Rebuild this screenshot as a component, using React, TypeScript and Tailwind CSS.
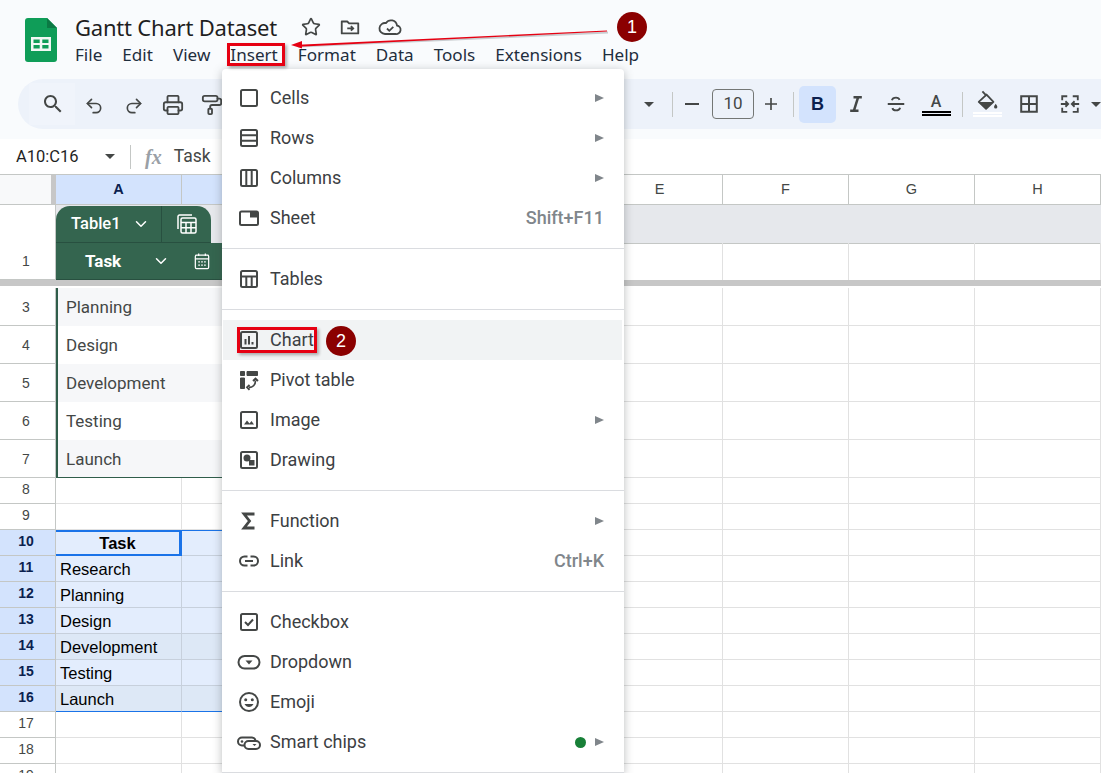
import { Printer, PaintRoller, Redo2, Star, Undo2, ChevronDown } from 'lucide-react'
import type { ReactNode } from 'react'

const sans = '[font-family:Roboto,sans-serif]'
const arial = '[font-family:Liberation_Sans,Arial,sans-serif]'

function Ico({ children, size = 24, className = '' }: { children: ReactNode; size?: number; className?: string }) {
  return (
    <svg
      viewBox="0 0 24 24"
      width={size}
      height={size}
      fill="none"
      stroke="currentColor"
      strokeWidth={2}
      className={`shrink-0 ${className}`}
    >
      {children}
    </svg>
  )
}

function Caret({ className = '' }: { className?: string }) {
  return <span className={`block w-0 h-0 border-x-[5px] border-x-transparent border-t-[5px] border-t-[#444746] ${className}`} />
}

const menuIcons: Record<string, ReactNode> = {
  Cells: <rect x="4" y="4" width="16" height="16" rx="1.5" />,
  Rows: (
    <>
      <rect x="4" y="4" width="16" height="16" rx="1.5" />
      <path d="M4 9.300h16M4 14.700h16" />
    </>
  ),
  Columns: (
    <>
      <rect x="4" y="4" width="16" height="16" rx="1.5" />
      <path d="M9.300 4v16M14.700 4v16" />
    </>
  ),
  Sheet: (
    <>
      <rect x="3" y="5.500" width="18" height="13.500" rx="1.500" />
      <path d="M13 5.500h8v6h-8z" fill="currentColor" stroke="none" />
    </>
  ),
  Tables: (
    <>
      <rect x="4" y="4" width="16" height="16" rx="1.5" />
      <path d="M4 9.500h16M9.300 9.500V20M14.700 9.500V20" />
    </>
  ),
  Chart: (
    <>
      <rect x="4" y="4" width="16" height="16" rx="1.5" />
      <path d="M8.500 11v5.500M12 8v8.500M15.500 14v2.500" />
    </>
  ),
  'Pivot table': (
    <>
      <path d="M3.500 3.500h4v4h-4zM10 3.500h10.500v4H10zM3.500 10h4v10.500h-4z" fill="currentColor" stroke="currentColor" strokeWidth={1} strokeLinejoin="round" />
      <path d="M12 19.500c3.500 0 6.500-2.500 6.500-7M12.500 16.800 10 19.300l2.500 2.500M16 13l2.500-2.500L21 13" strokeWidth={1.800} />
    </>
  ),
  Image: (
    <>
      <rect x="4" y="4" width="16" height="16" rx="1.5" />
      <path d="m7 16.500 3-4 2.500 3 2-2.500 2.500 3.500z" fill="currentColor" stroke="none" />
    </>
  ),
  Drawing: (
    <>
      <rect x="4" y="4" width="16" height="16" rx="1.5" />
      <circle cx="10" cy="10" r="3.500" fill="currentColor" stroke="none" />
      <path d="M12 12h5.500v5.500H12z" fill="currentColor" stroke="none" />
    </>
  ),
  Function: <path d="M17.500 5H7l5.500 7L7 19h10.500" strokeWidth={2.800} />,
  Link: <path d="M10.500 7.500H7.500a4.500 4.500 0 0 0 0 9h3M13.500 7.500h3a4.500 4.500 0 0 1 0 9h-3M8 12h8" />,
  Checkbox: (
    <>
      <rect x="4" y="4" width="16" height="16" rx="1.500" />
      <path d="m8 12 3 3 5-5.500" />
    </>
  ),
  Dropdown: (
    <>
      <rect x="1.500" y="6" width="21" height="12.500" rx="6.200" />
      <path d="M8.500 10.500h7L12 14.500z" fill="currentColor" stroke="none" />
    </>
  ),
  Emoji: (
    <>
      <circle cx="12" cy="12" r="9" />
      <circle cx="8.700" cy="9.800" r="1.500" fill="currentColor" stroke="none" />
      <circle cx="15.300" cy="9.800" r="1.500" fill="currentColor" stroke="none" />
      <path d="M7.500 14c1 2 2.600 3 4.500 3s3.500-1 4.500-3z" fill="currentColor" stroke="none" />
    </>
  ),
  'Smart chips': (
    <>
      <path d="M7 15.500H5a3.800 3.800 0 0 1 0-8h10a3.800 3.800 0 0 1 3.500 3" />
      <rect x="7.500" y="11" width="15.500" height="8" rx="4" />
      <circle cx="5" cy="11.500" r="1.300" fill="currentColor" stroke="none" />
      <path d="M15.500 14h4l-2 2z" fill="currentColor" stroke="none" />
    </>
  ),
}

type Item = { label: string; sub?: boolean; keys?: string; dot?: boolean; hot?: boolean }

const menuGroups: Item[][] = [
  [{ label: 'Cells', sub: true }, { label: 'Rows', sub: true }, { label: 'Columns', sub: true }, { label: 'Sheet', keys: 'Shift+F11' }],
  [{ label: 'Tables' }],
  [{ label: 'Chart', hot: true }, { label: 'Pivot table' }, { label: 'Image', sub: true }, { label: 'Drawing' }],
  [{ label: 'Function', sub: true }, { label: 'Link', keys: 'Ctrl+K' }],
  [{ label: 'Checkbox' }, { label: 'Dropdown' }, { label: 'Emoji' }, { label: 'Smart chips', sub: true, dot: true }],
]

function InsertMenu() {
  return (
    <div className={`absolute left-[222px] top-[69px] w-[402px] h-[704px] bg-white pt-[9px] shadow-[0_2px_10px_rgba(60,64,67,0.35)] rounded-t-[4px] z-20 ${sans}`}>
      {menuGroups.map((group, i) => (
        <div key={i} className="border-b border-[#dadce0] pb-[10px] mb-[10px]">
          {group.map((item) => (
            <div
              key={item.label}
              className={`h-[40px] flex items-center pl-[14px] pr-[18px] mr-[2px] ml-[1px] text-[18px] text-[#3c4043] ${item.hot ? 'bg-[#f1f3f4]' : ''}`}
            >
              <Ico className="text-[#444746]">{menuIcons[item.label]}</Ico>
              <span className="ml-[9px] mb-[2px]">{item.label}</span>
              {item.keys && <span className="ml-auto mb-[2px] text-[#80868b] font-medium">{item.keys}</span>}
              {item.dot && <span className="ml-auto mr-[9px] w-[11px] h-[11px] rounded-full bg-[#188038]" />}
              {item.sub && (
                <span className={`${item.dot ? '' : 'ml-auto'} block w-0 h-0 border-y-[4px] border-y-transparent border-l-[9px] border-l-[#80868b]`} />
              )}
            </div>
          ))}
        </div>
      ))}
    </div>
  )
}

function Header() {
  return (
    <div className="h-[139px] bg-[#f9fbfd] flex flex-col">
      <div className="h-[79px] flex">
        <svg viewBox="0 0 32 44" width="32" height="44" className="ml-[25px] mt-[18px] shrink-0">
          <path d="M3 0h19l10 10v31a3 3 0 0 1-3 3H3a3 3 0 0 1-3-3V3a3 3 0 0 1 3-3z" fill="#0f9d58" />
          <path d="M22 0l10 10H22z" fill="#0b7a44" />
          <path d="M6 19h20v14H6z" fill="#f1f8f4" />
          <path d="M8.500 21.500h6.200v3.500H8.500zM17.300 21.500h6.200v3.500h-6.200zM8.500 27h6.200v3.500H8.500zM17.300 27h6.200v3.500h-6.200z" fill="#0f9d58" />
        </svg>
        <div className="ml-[18px] flex flex-col">
          <div className="flex items-center h-[30px] mt-[12px] text-[#1f1f1f]">
            <span className="text-[22px] leading-[30px] [font-family:Noto_Sans,sans-serif] tracking-[-0.2px]">Gantt Chart Dataset</span>
            <Star size={20} strokeWidth={2} className="ml-[24px] text-[#444746]" />
            <Ico size={22} className="ml-[18px] text-[#444746]">
              <path d="M3 19V6h6l2 2h10v11z" strokeLinejoin="round" />
              <path d="M9 13.500h6M13 11l2.500 2.500L13 16" />
            </Ico>
            <Ico size={24} className="ml-[17px] text-[#444746]">
              <path d="M17.500 19H7a5.500 5.500 0 1 1 1-10.900 6 6 0 0 1 11 2.400 4.300 4.300 0 0 1-1.500 8.500z" strokeWidth={1.800} />
              <path d="m9 13.500 2.300 2.300 4-4" strokeWidth={1.800} />
            </Ico>
          </div>
          <div className="flex gap-[20px] mt-[1px] text-[17.100px] leading-[24px] text-[#1f2e3d] [font-family:Noto_Sans,sans-serif]">
            {['File', 'Edit', 'View', 'Insert', 'Format', 'Data', 'Tools', 'Extensions', 'Help'].map((m) => (
              <span key={m}>{m}</span>
            ))}
          </div>
        </div>
      </div>
      <div className="h-[50px] w-[1083px] ml-[18px] bg-[#edf2fa] rounded-l-[25px] flex items-center overflow-hidden text-[#444746]">
        <div className="w-[46px] h-[42px] ml-[11px] bg-[#f0f4fb] flex items-center justify-center">
          <svg viewBox="0 0 24 24" width="24" height="24" fill="currentColor" className="ml-[2px]">
            <path d="M15.500 14h-.79l-.28-.27C15.410 12.590 16 11.110 16 9.500 16 5.910 13.090 3 9.500 3S3 5.910 3 9.500 5.910 16 9.500 16c1.610 0 3.090-.59 4.230-1.570l.27.28v.79l5 4.990L20.490 19l-4.990-5zm-6 0C7.010 14 5 11.990 5 9.500S7.010 5 9.500 5 14 7.010 14 9.500 11.990 14 9.500 14z" />
          </svg>
        </div>
        <Undo2 size={20} strokeWidth={2} className="ml-[9px] mt-[3px]" />
        <Redo2 size={20} strokeWidth={2} className="ml-[20px] mt-[3px]" />
        <Printer size={22} strokeWidth={2} className="ml-[18px] mt-[2px]" />
        <PaintRoller size={22} strokeWidth={2} className="ml-[17px] mt-[2px]" />
        <div className="ml-auto flex items-center shrink-0 w-[461px] h-full">
          <Caret className="ml-[4px]" />
          <span className="ml-[18px] w-px h-[25px] bg-[#c4c7c5]" />
          <span className="ml-[12px] w-[14px] h-[2px] bg-[#444746]" />
          <span className={`ml-[13px] w-[42px] h-[30px] border border-[#747775] rounded-[4px] flex items-center justify-center text-[17px] text-[#444746] ${sans}`}>10</span>
          <Ico size={18} className="ml-[8px]"><path d="M12 4v16M4 12h16" strokeWidth={2.200} /></Ico>
          <span className="ml-[13px] w-px h-[25px] bg-[#c4c7c5]" />
          <span className={`ml-[5px] w-[37px] h-[37px] rounded-[5px] bg-[#d3e3fd] flex items-center justify-center text-[18px] font-bold text-[#0b1f4f] ${arial}`}>B</span>
          <span className="ml-[5px] w-[30px] flex justify-center">
            <Ico size={20}><path d="M9 4h10M5 20h10M14.500 4l-5 16" strokeWidth={3} /></Ico>
          </span>
          <span className="ml-[10px] w-[30px] flex justify-center">
            <Ico size={22}><path d="M3 12h18M7.500 8c.5-2 2.500-3 4.500-3s3.500 1 4 2.500M16.500 16c-.5 2-2.500 3-4.500 3s-3.500-1-4-2.500" /></Ico>
          </span>
          <span className="ml-[10px] w-[30px] flex flex-col items-center">
            <span className={`text-[16px] leading-[17px] font-medium text-[#444746] ${sans}`}>A</span>
            <span className="w-[29px] h-[5px] mt-[1px] border-y-2 border-black" />
          </span>
          <span className="ml-[11px] w-px h-[25px] bg-[#c4c7c5]" />
          <span className="ml-[9px] w-[30px] flex flex-col items-center">
            <Ico size={22} className="-mt-[1px]">
              <path d="m7 1.500 4.500 5" />
              <path d="M11.500 5 3 13l8 7.500 8-7.500z" strokeLinejoin="round" />
              <path d="M3 13h16l-8 7.500z" fill="currentColor" stroke="none" />
              <path d="M21.500 15c-1 1.500-1.800 2.500-1.800 3.500a1.800 1.800 0 0 0 3.600 0c0-1-.8-2-1.800-3.500z" fill="currentColor" stroke="none" />
            </Ico>
            <span className="w-[29px] h-[5px] border-y-2 border-white" />
          </span>
          <span className="ml-[12px] w-[30px] flex justify-center">
            <Ico size={22}><path d="M3.500 3.500h17v17h-17zM12 3.500v17M3.500 12h17" strokeWidth={2.200} /></Ico>
          </span>
          <span className="ml-[11px] w-[30px] flex justify-center">
            <Ico size={22}><path d="M9 3.500H3.500V8M9 20.500H3.500V16M15 3.500h5.500V8M15 20.500h5.500V16M2 12h7.500M7 9l3 3-3 3M22 12h-7.500M17 9l-3 3 3 3" /></Ico>
          </span>
          <Caret className="ml-[6px] shrink-0" />
        </div>
      </div>
    </div>
  )
}

function FormulaBar() {
  return (
    <div className={`h-[35px] bg-white flex items-center ${sans} text-[#1f1f1f]`}>
      <span className="ml-[16px] mt-[1px] w-[88px] text-[16.500px]">A10:C16</span>
      <Caret className="ml-[1px]" />
      <span className="ml-[15px] w-px h-[24px] bg-[#c4c7c5]" />
      <span className="ml-[14px] text-[20px] italic font-bold text-[#9aa0a6] [font-family:Liberation_Serif,serif]">fx</span>
      <span className="ml-[12px] text-[17.500px] text-[#444746]">Task</span>
    </div>
  )
}

const rowClass = 'grid grid-cols-[56px_126px_126px_126px_163px_126px_126px_126px_126px]'
const plainCols = [1, 2, 3, 4, 5, 6, 7]
const colNames = ['B', 'C', 'D', 'E', 'F', 'G', 'H']

function ColumnHeader() {
  return (
    <div className={`${rowClass} h-[31px] border-y border-[#c4c7c5] text-[14.500px] text-[#444746] ${arial}`}>
      <div className="bg-[#f8f9fa] border-r-[5px] border-[#c7c7c7]" />
      <div className="bg-[#d3e3fd] border-r border-[#c4c7c5] flex items-center justify-center font-bold text-[#0b1f4f]">A</div>
      {colNames.map((n, i) => (
        <div key={n} className={`border-r border-[#c4c7c5] flex items-center justify-center ${i < 3 ? 'bg-[#d3e3fd]' : 'bg-white'}`}>
          {n}
        </div>
      ))}
    </div>
  )
}

function Gutter({ n, active, short }: { n?: number; active?: boolean; short?: boolean }) {
  return (
    <div
      className={`border-r border-b border-[#c4c7c5] flex items-center justify-center pr-[3px] text-[14px] leading-[18px] ${arial} ${short ? 'pb-[3px]' : ''} ${
        active ? 'bg-[#d3e3fd] font-bold text-[#0b1f4f]' : 'bg-white text-[#444746]'
      }`}
    >
      {n}
    </div>
  )
}

function BlankCells() {
  return (
    <>
      {plainCols.map((c) => (
        <div key={c} className="border-r border-b border-[#e1e1e1]" />
      ))}
    </>
  )
}

const bandedRows = [
  { n: 3, text: 'Planning', h: 'h-[39px] pt-[1px]', tint: true },
  { n: 4, text: 'Design', h: 'h-[38px]', tint: false },
  { n: 5, text: 'Development', h: 'h-[38px]', tint: true },
  { n: 6, text: 'Testing', h: 'h-[38px]', tint: false },
  { n: 7, text: 'Launch', h: 'h-[38px]', tint: true },
]

const taskRows = [
  { n: 11, text: 'Research', dark: false },
  { n: 12, text: 'Planning', dark: false },
  { n: 13, text: 'Design', dark: false },
  { n: 14, text: 'Development', dark: true },
  { n: 15, text: 'Testing', dark: false },
  { n: 16, text: 'Launch', dark: true },
]

function Sheet() {
  return (
    <div>
      <ColumnHeader />
      <div className={`${rowClass} h-[38px]`}>
        <Gutter />
        <div className="col-span-8 bg-[#e6e8ec] border-b border-[#c4c7c5]">
          <div className={`w-[155px] h-[37px] mt-px bg-[#34654f] border-b border-[#285040] rounded-t-[14px] flex items-center text-white text-[16.500px] font-medium ${sans}`}>
            <span className="ml-[15px]">Table1</span>
            <ChevronDown size={18} strokeWidth={2} className="ml-[11px]" />
            <span className="ml-[11px] w-px h-full bg-[#285040]" />
            <Ico size={24} className="ml-[13px]">
              <path d="M3 17V4.500A1.500 1.500 0 0 1 4.500 3H17" strokeWidth={1.500} />
              <rect x="6" y="6" width="15" height="15" rx="1.500" strokeWidth={1.500} />
              <path d="M6 10.500h15M11 10.500V21M16 10.500V21M6 15.700h15" strokeWidth={1.500} />
            </Ico>
          </div>
        </div>
      </div>
      <div className={`${rowClass} h-[37px]`}>
        <Gutter n={1} />
        <div className={`col-span-4 bg-[#34654f] border-b border-[#285040] flex items-center text-white text-[17px] font-bold ${sans}`}>
          <span className="ml-[29px] mt-[2px]">Task</span>
          <ChevronDown size={18} strokeWidth={2} className="ml-[31px]" />
          <Ico size={20} className="ml-[22px]">
            <rect x="4" y="5" width="16" height="16" rx="1.500" strokeWidth={1.500} />
            <path d="M4 9.500h16M8 3v3M16 3v3" strokeWidth={1.500} />
            <path d="M7.500 13h9M7.500 17h9" strokeWidth={1.500} strokeDasharray="2 1.500" />
          </Ico>
        </div>
        {[5, 6, 7, 8].map((c) => (
          <div key={c} className="border-r border-[#e1e1e1]" />
        ))}
      </div>
      <div className="h-[7px] bg-[#c7c7c7] border-b border-white" />
      {bandedRows.map((r) => (
        <div key={r.n} className={`${rowClass} ${r.h}`}>
          <Gutter n={r.n} />
          <div
            className={`col-span-4 border-l-2 border-[#2f5d4a] flex items-center pl-[8px] text-[17px] text-[#444746] ${sans} ${r.tint ? 'bg-[#f6f7f9]' : 'bg-white'} ${r.n === 7 ? 'border-b border-b-[#2f5d4a] pt-[2px]' : 'pt-[1px]'}`}
          >
            {r.text}
          </div>
          {[5, 6, 7, 8].map((c) => (
            <div key={c} className="border-r border-b border-[#e1e1e1]" />
          ))}
        </div>
      ))}
      {[8, 9].map((n) => (
        <div key={n} className={`${rowClass} h-[26px]`}>
          <Gutter n={n} short />
          <div className="border-r border-b border-[#e1e1e1]" />
          <BlankCells />
        </div>
      ))}
      <div className={`${rowClass} h-[26px]`}>
        <Gutter n={10} active short />
        <div className={`bg-[#e3edfd] border-y-2 border-r-[3px] border-[#1a73e8] flex items-center justify-center text-[16.500px] leading-[20px] font-bold text-black ${arial}`}>Task</div>
        <div className="border-t border-t-[#1a73e8] border-r border-b border-[#c7d0dc] bg-[#e3edfd]" />
        <div className="border-t border-t-[#1a73e8] border-r border-b border-[#c7d0dc] bg-[#e3edfd]" />
        {[4, 5, 6, 7, 8].map((c) => (
          <div key={c} className="border-r border-b border-[#e1e1e1]" />
        ))}
      </div>
      {taskRows.map((r) => (
        <div key={r.n} className={`${rowClass} h-[26px]`}>
          <Gutter n={r.n} active short />
          <div
            className={`border-r border-b border-[#c7d0dc] flex items-center pl-[4px] pt-[1px] text-[16.500px] leading-[20px] text-black ${arial} ${r.dark ? 'bg-[#dde8f6]' : 'bg-[#e3edfd]'} ${r.n === 16 ? 'border-b-[#1a73e8]' : ''}`}
          >
            {r.text}
          </div>
          <div className={`border-r border-b border-[#c7d0dc] ${r.dark ? 'bg-[#dde8f6]' : 'bg-[#e3edfd]'} ${r.n === 16 ? 'border-b-[#1a73e8]' : ''}`} />
          <div className="border-r border-b border-[#c7d0dc] bg-[#e3edfd]" />
          {[4, 5, 6, 7, 8].map((c) => (
            <div key={c} className="border-r border-b border-[#e1e1e1]" />
          ))}
        </div>
      ))}
      {[17, 18, 19].map((n) => (
        <div key={n} className={`${rowClass} h-[26px]`}>
          <Gutter n={n} short />
          <div className="border-r border-b border-[#e1e1e1]" />
          <BlankCells />
        </div>
      ))}
    </div>
  )
}

function Annotations() {
  return (
    <>
      <svg className="absolute inset-0 z-30 pointer-events-none" width="1101" height="773">
        <path d="M298 46.500 608 32.500" stroke="#9aa0a6" strokeOpacity={0.5} strokeWidth={2} />
        <path d="M298 44.800 607 30.500 607 31.500 298 46.800z" fill="#e60012" />
        <path d="M291 45 302 41 302 48.500z" fill="#e60012" />
      </svg>
      <span className={`absolute z-30 left-[617px] top-[12px] w-[30px] h-[30px] rounded-full bg-[#8b0000] text-white flex items-center justify-center text-[18px] ${arial}`}>1</span>
      <span className={`absolute z-30 left-[326px] top-[326px] w-[30px] h-[30px] rounded-full bg-[#8b0000] text-white flex items-center justify-center text-[18px] ${arial}`}>2</span>
      <span className="absolute z-30 left-[227px] top-[43px] w-[58px] h-[23px] border-[3px] border-[#e60012] shadow-[2px_2px_3px_rgba(0,0,0,0.3)]" />
      <span className="absolute z-30 left-[237px] top-[327px] w-[80px] h-[26px] border-[3px] border-[#e60012] shadow-[2px_2px_3px_rgba(0,0,0,0.3)]" />
    </>
  )
}

export default function App() {
  return (
    <div className="relative w-[1101px] h-[773px] overflow-hidden bg-white">
      <Header />
      <FormulaBar />
      <Sheet />
      <InsertMenu />
      <Annotations />
    </div>
  )
}
